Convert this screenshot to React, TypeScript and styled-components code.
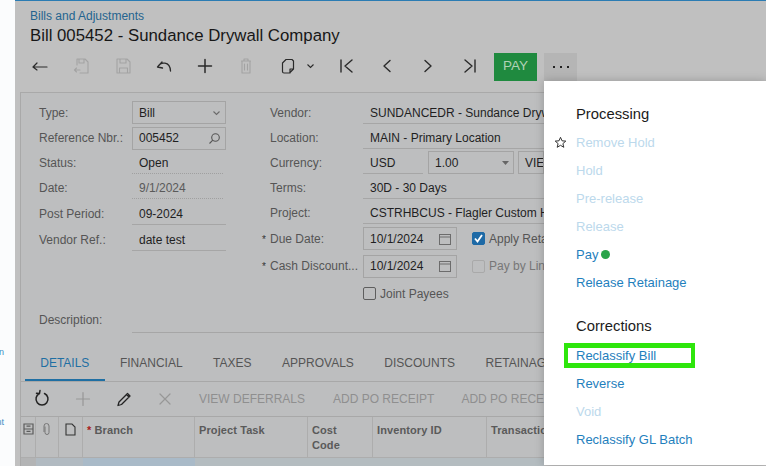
import React from "react";
import styled, { createGlobalStyle } from "styled-components";

const Global = createGlobalStyle`
  html, body { margin: 0; padding: 0; width: 766px; height: 466px; overflow: hidden; background: #fff; }
  * { box-sizing: border-box; }
  body { font-family: "Liberation Sans", Arial, sans-serif; }
`;

const Page = styled.div`
  position: relative;
  width: 766px;
  height: 466px;
  display: flex;
  overflow: hidden;
`;
const Rail = styled.div`
  width: 15px;
  flex: none;
  background: #fbfcfd;
  color: #3f8fc4;
  font-size: 9px;
  position: relative;
  overflow: hidden;
`;
const RailText = styled.span<{ $top: number }>`
  position: absolute;
  right: 11px;
  top: ${(p) => p.$top}px;
  line-height: 10px;
`;
const Main = styled.div`
  flex: 1;
  min-width: 0;
  background: #c0c0c0;
  border-top: 1px solid #2b7cb3;
  display: flex;
  flex-direction: column;
`;
const Crumb = styled.div`
  margin: 9px 0 0 15px;
  font-size: 12px;
  line-height: 12px;
  color: #24648f;
`;
const Title = styled.div`
  margin: 4px 0 0 15px;
  font-size: 16.8px;
  line-height: 20px;
  color: #171717;
  white-space: nowrap;
`;
const Toolbar = styled.div`
  height: 28px;
  margin-top: 7px;
  display: flex;
  align-items: flex-start;
  flex: none;
`;
const ToolIcon = styled.span<{ $w: number; $off?: boolean; $ml?: number }>`
  width: ${(p) => p.$w}px;
  margin-left: ${(p) => p.$ml ?? 0}px;
  flex: none;
  height: 25px;
  display: flex;
  align-items: center;
  justify-content: center;
  color: ${(p) => (p.$off ? "#a3a3a3" : "#2a2a2a")};
`;
const PayButton = styled.div`
  width: 43px;
  height: 28px;
  margin-left: 6px;
  background: #1f8a3f;
  color: #b0d2b6;
  font-size: 13.5px;
  padding-bottom: 3px;
  display: flex;
  align-items: center;
  justify-content: center;
`;
const MoreButton = styled.div`
  width: 33px;
  height: 28px;
  margin-left: 7px;
  background: #b5b5b5;
  display: flex;
  align-items: center;
  justify-content: center;
  gap: 5px;
`;
const Dot = styled.i`
  width: 2px;
  height: 2px;
  background: #222;
`;
const FormPanel = styled.div`
  margin: 11px 0 0 5px;
  width: 524px;
  flex: 1;
  min-height: 0;
  background: #bdbebf;
  border-top: 1px solid #a9a9a9;
  border-left: 1px solid #a9a9a9;
  display: flex;
  flex-direction: column;
  overflow: hidden;
`;
const Columns = styled.div`
  display: flex;
  padding-top: 7px;
  flex: none;
`;
const LeftCol = styled.div`
  width: 227px;
  flex: none;
  display: flex;
  flex-direction: column;
`;
const RightCol = styled.div`
  flex: 1;
  min-width: 0;
  display: flex;
  flex-direction: column;
`;
const Row = styled.div<{ $h: number }>`
  height: ${(p) => p.$h}px;
  display: flex;
  align-items: center;
`;
const Label = styled.div<{ $w: number; $pl: number }>`
  width: ${(p) => p.$w}px;
  padding-left: ${(p) => p.$pl}px;
  flex: none;
  font-size: 12px;
  color: #555;
  white-space: nowrap;
  position: relative;
`;
const DescLabel = styled(Label)`
  padding-top: 6px;
`;
const Star = styled.span`
  position: absolute;
  left: 14px;
  top: 2px;
  color: #333;
  font-size: 10px;
`;
const Boxed = styled.div<{ $w: number; $ml?: number }>`
  width: ${(p) => p.$w}px;
  margin-left: ${(p) => p.$ml ?? 0}px;
  height: 23px;
  flex: none;
  border: 1px solid #a4a4a4;
  padding: 0 4px 0 6px;
  display: flex;
  align-items: center;
  justify-content: space-between;
  font-size: 12px;
  color: #1f1f1f;
  overflow: hidden;
  white-space: nowrap;
`;
const Plain = styled.div<{ $w: number; $line?: "solid" | "dotted"; $muted?: boolean }>`
  width: ${(p) => p.$w}px;
  height: 22px;
  flex: none;
  padding: 3px 0 0 7px;
  font-size: 12px;
  line-height: 16px;
  color: ${(p) => (p.$muted ? "#5a5a5a" : "#1f1f1f")};
  border-bottom: 1px ${(p) => (p.$line === "dotted" ? "dotted #a0a0a0" : "solid #a6a6a6")};
  white-space: nowrap;
  overflow: hidden;
`;
const Check = styled.span<{ $on?: boolean; $off?: boolean }>`
  width: 13px;
  height: 13px;
  flex: none;
  border-radius: 2px;
  border: 1px solid ${(p) => (p.$on ? "#1e6aa6" : p.$off ? "#a9a9a9" : "#5e5e5e")};
  background: ${(p) => (p.$on ? "#1e6aa6" : "transparent")};
  display: flex;
  align-items: center;
  justify-content: center;
`;
const CheckText = styled.span<{ $off?: boolean }>`
  margin-left: 4px;
  font-size: 12px;
  color: ${(p) => (p.$off ? "#777" : "#555")};
  white-space: nowrap;
`;
const CheckGroup = styled.div`
  display: flex;
  align-items: center;
  margin-left: 15px;
`;
const JointGroup = styled(CheckGroup)`
  margin-left: 115px;
`;
const DescRow = styled.div`
  display: flex;
  align-items: flex-start;
  height: 26px;
  flex: none;
`;
const DescLine = styled.div`
  flex: 1;
  height: 26px;
  border-bottom: 1px solid #a6a6a6;
`;
const Tabs = styled.div`
  height: 49px;
  flex: none;
  padding-left: 4px;
  border-bottom: 1px solid #a8a8a8;
  display: flex;
  overflow: hidden;
`;
const Tab = styled.div<{ $active?: boolean }>`
  flex: none;
  padding: 23px 15.25px 0;
  font-size: 12px;
  line-height: 14px;
  color: ${(p) => (p.$active ? "#1f6fa3" : "#555")};
  height: 49px;
  border-bottom: 3px solid ${(p) => (p.$active ? "#1f6fa3" : "transparent")};
  white-space: nowrap;
`;
const GridBar = styled.div`
  height: 35px;
  flex: none;
  border-bottom: 1px solid #a8a8a8;
  display: flex;
  align-items: center;
  font-size: 12px;
  color: #8f8f8f;
  white-space: nowrap;
  overflow: hidden;
`;
const BarIcon = styled.span<{ $w: number; $off?: boolean }>`
  width: ${(p) => p.$w}px;
  flex: none;
  display: flex;
  align-items: center;
  justify-content: center;
  color: ${(p) => (p.$off ? "#979797" : "#222")};
`;
const BarText = styled.span<{ $ml: number }>`
  margin-left: ${(p) => p.$ml}px;
  flex: none;
`;
const HeadRow = styled.div`
  height: 41px;
  display: flex;
  flex: none;
  border-bottom: 1px solid #adadad;
  overflow: hidden;
`;
const Head = styled.div<{ $w: number }>`
  width: ${(p) => p.$w}px;
  flex: none;
  border-right: 1px solid #adadad;
  padding: 5.5px 0 0 4px;
  font-size: 11px;
  font-weight: 700;
  line-height: 15px;
  color: #5a5a5a;
  white-space: nowrap;
  overflow: hidden;
  letter-spacing: 0.1px;
`;
const HeadIcon = styled(Head)`
  padding: 6px 0 0;
  display: flex;
  justify-content: center;
  align-items: flex-start;
`;
const Req = styled.span`
  color: #a81c1c;
`;
const DataRow = styled.div`
  display: flex;
  flex: 1;
  background: #b4bcc0;
`;
const DataCell = styled.div<{ $w: number; $tone?: string }>`
  width: ${(p) => p.$w}px;
  flex: none;
  background: ${(p) => p.$tone ?? "transparent"};
`;
const Menu = styled.div`
  position: absolute;
  left: 544px;
  top: 81px;
  width: 222px;
  height: 384px;
  background: #fff;
  box-shadow: 0 0 9px rgba(0, 0, 0, 0.22);
  padding: 23px 0 0 32px;
`;
const MenuHead = styled.div<{ $mt?: number }>`
  font-size: 14.8px;
  line-height: 20px;
  height: 20px;
  margin-top: ${(p) => p.$mt ?? 0}px;
  color: #1b1b1b;
`;
const MenuItem = styled.div<{ $off?: boolean; $mt?: number }>`
  font-size: 13px;
  height: 28px;
  margin-top: ${(p) => p.$mt ?? 0}px;
  display: flex;
  align-items: center;
  color: ${(p) => (p.$off ? "#bcd9ec" : "#1f80bd")};
  position: relative;
  white-space: nowrap;
`;
const StarIcon = styled.span`
  position: absolute;
  left: -22px;
  top: 8px;
  width: 13px;
  height: 13px;
  display: flex;
`;
const Green = styled.i`
  width: 9px;
  height: 9px;
  margin-left: 3px;
  border-radius: 50%;
  background: #2aa44a;
`;
const Highlight = styled.div`
  position: absolute;
  left: -12px;
  top: 2px;
  width: 131px;
  height: 25px;
  border-style: solid;
  border-color: #2ee60c;
  border-width: 5px 4px;
  pointer-events: none;
`;

const S = ({ children, sw = 1.4 }: { children: React.ReactNode; sw?: number }) => (
  <svg width={20} height={20} viewBox="0 0 20 20" fill="none" stroke="currentColor" strokeWidth={sw} strokeLinecap="round" strokeLinejoin="round">
    {children}
  </svg>
);

const Chevron = ({ tone = "#6a6a6a" }: { tone?: string }) => (
  <svg width="9" height="6" viewBox="0 0 9 6" fill="none" stroke={tone} strokeWidth="1.1">
    <path d="M1.500 1.500 4.500 4.500 7.500 1.500" />
  </svg>
);
const Calendar = () => (
  <svg width="14" height="14" viewBox="0 0 14 14" fill="none" stroke="#6c6c6c" strokeWidth="1">
    <rect x="1.500" y="2.500" width="11" height="10" />
    <path d="M1.500 5H12.500" />
  </svg>
);
const Tick = () => (
  <svg width="11" height="11" viewBox="0 0 11 11" fill="none" stroke="#fff" strokeWidth="1.800">
    <path d="M2 5.500 4.500 8.500 9 2" />
  </svg>
);

export default function App() {
  return (
    <Page>
      <Global />
      <Rail>
        <RailText $top={347}>n</RailText>
        <RailText $top={417}>nt</RailText>
      </Rail>
      <Main>
        <Crumb>Bills and Adjustments</Crumb>
        <Title>Bill 005452 - Sundance Drywall Company</Title>
        <Toolbar>
          <ToolIcon $w={50}><S sw={1.2}><path d="M3 11H17M3 11l4-4M3 11l4 3" /></S></ToolIcon>
          <ToolIcon $w={32} $off><S sw={1.1}><path d="M6 9V3h8l3 3v11H9M8 3v4h5V3M9 14H3.500M5.500 12l-2 2 2 2" /></S></ToolIcon>
          <ToolIcon $w={52} $off><S sw={1.1}><path d="M4 3h10l3 3v11H4zM7 3v4h6V3M6.500 17v-5h8v5" /></S></ToolIcon>
          <ToolIcon $w={30}><S sw={1.3}><path d="M3.500 11l4.500-5M3.500 11l5 1M3.500 11C6.500 5.500 16 5 16.500 15" /></S></ToolIcon>
          <ToolIcon $w={52}><S sw={1.5}><path d="M10 3.500v13M3.500 10h13" /></S></ToolIcon>
          <ToolIcon $w={30} $off><S sw={1.1}><path d="M5.500 5h9M8 5V3h4v2M6 5v12h8V5M8.500 8v6M11.500 8v6" /></S></ToolIcon>
          <ToolIcon $w={20} $ml={17}><S sw={1.2}><path d="M8 3.500h6l1.500 1.500v8l-4 4H6a1.500 1.500 0 0 1-1.500-1.500V7zM15.500 13H12v4" /></S></ToolIcon>
          <ToolIcon $w={24}><Chevron tone="#2a2a2a" /></ToolIcon>
          <ToolIcon $w={48}><S sw={1.4}><path d="M5 4v12M16 4 9 10l7 6" /></S></ToolIcon>
          <ToolIcon $w={34}><S sw={1.4}><path d="M13 4.500 7 10l6 5.500" /></S></ToolIcon>
          <ToolIcon $w={48}><S sw={1.4}><path d="M7 4.500 13 10l-6 5.500" /></S></ToolIcon>
          <ToolIcon $w={36}><S sw={1.4}><path d="M5 4l7 6-7 6M15 4v12" /></S></ToolIcon>
          <PayButton>PAY</PayButton>
          <MoreButton><Dot /><Dot /><Dot /></MoreButton>
        </Toolbar>
        <FormPanel>
          <Columns>
            <LeftCol>
              <Row $h={25}>
                <Label $w={111} $pl={18}>Type:</Label>
                <Boxed $w={94}>Bill<Chevron /></Boxed>
              </Row>
              <Row $h={26}>
                <Label $w={111} $pl={18}>Reference Nbr.:</Label>
                <Boxed $w={94}>
                  005452
                  <svg width="13" height="13" viewBox="0 0 13 13" fill="none" stroke="#555" strokeWidth="1.100">
                    <circle cx="7.500" cy="5.500" r="3.800" />
                    <path d="M4.800 8.200 1.500 11.500" />
                  </svg>
                </Boxed>
              </Row>
              <Row $h={24}>
                <Label $w={111} $pl={18}>Status:</Label>
                <Plain $w={91} $line="dotted">Open</Plain>
              </Row>
              <Row $h={25}>
                <Label $w={111} $pl={18}>Date:</Label>
                <Plain $w={91} $line="dotted" $muted>9/1/2024</Plain>
              </Row>
              <Row $h={28}>
                <Label $w={111} $pl={18}>Post Period:</Label>
                <Plain $w={94}>09-2024</Plain>
              </Row>
              <Row $h={24}>
                <Label $w={111} $pl={18}>Vendor Ref.:</Label>
                <Plain $w={94}>date test</Plain>
              </Row>
            </LeftCol>
            <RightCol>
              <Row $h={25}>
                <Label $w={115} $pl={22}>Vendor:</Label>
                <Plain $w={181}>SUNDANCEDR - Sundance Drywall Company</Plain>
              </Row>
              <Row $h={25}>
                <Label $w={115} $pl={22}>Location:</Label>
                <Plain $w={181}>MAIN - Primary Location</Plain>
              </Row>
              <Row $h={25}>
                <Label $w={115} $pl={22}>Currency:</Label>
                <Plain $w={60}>USD</Plain>
                <Boxed $w={86} $ml={5}>
                  1.00
                  <svg width="7" height="4" viewBox="0 0 7 4"><path d="M0 0h7L3.500 4z" fill="#666" /></svg>
                </Boxed>
                <Boxed $w={26} $ml={4}>VIEW</Boxed>
              </Row>
              <Row $h={25}>
                <Label $w={115} $pl={22}>Terms:</Label>
                <Plain $w={181}>30D - 30 Days</Plain>
              </Row>
              <Row $h={25}>
                <Label $w={115} $pl={22}>Project:</Label>
                <Plain $w={181}>CSTRHBCUS - Flagler Custom Homes</Plain>
              </Row>
              <Row $h={27}>
                <Label $w={115} $pl={22}><Star>*</Star>Due Date:</Label>
                <Boxed $w={94}>10/1/2024<Calendar /></Boxed>
                <CheckGroup>
                  <Check $on><Tick /></Check>
                  <CheckText>Apply Reta</CheckText>
                </CheckGroup>
              </Row>
              <Row $h={28}>
                <Label $w={115} $pl={22}><Star>*</Star>Cash Discount...</Label>
                <Boxed $w={94}>10/1/2024<Calendar /></Boxed>
                <CheckGroup>
                  <Check $off />
                  <CheckText $off>Pay by Lin</CheckText>
                </CheckGroup>
              </Row>
              <Row $h={27}>
                <JointGroup>
                  <Check />
                  <CheckText>Joint Payees</CheckText>
                </JointGroup>
              </Row>
            </RightCol>
          </Columns>
          <DescRow>
            <DescLabel $w={111} $pl={18}>Description:</DescLabel>
            <DescLine />
          </DescRow>
          <Tabs>
            <Tab $active>DETAILS</Tab>
            <Tab>FINANCIAL</Tab>
            <Tab>TAXES</Tab>
            <Tab>APPROVALS</Tab>
            <Tab>DISCOUNTS</Tab>
            <Tab>RETAINAGE</Tab>
          </Tabs>
          <GridBar>
            <BarIcon $w={41}><S sw={1.5}><path d="M7.500 4.500a6 6 0 1 0 5 0M8 1.500l-.5 3-3-.2" /></S></BarIcon>
            <BarIcon $w={41} $off><S sw={1.2}><path d="M10 3.500v13M3.500 10h13" /></S></BarIcon>
            <BarIcon $w={41}><S sw={1.3}><path d="M4 16.500l1-3.500 8.500-8.500 2.500 2.500-8.500 8.500zM12.500 5.500l2.500 2.500" /></S></BarIcon>
            <BarIcon $w={41} $off><S sw={1.2}><path d="M5 5l10 10M15 5 5 15" /></S></BarIcon>
            <BarText $ml={14}>VIEW DEFERRALS</BarText>
            <BarText $ml={28}>ADD PO RECEIPT</BarText>
            <BarText $ml={27}>ADD PO RECEIPT LINE</BarText>
          </GridBar>
          <HeadRow>
            <HeadIcon $w={15}>
              <svg width="11" height="12" viewBox="0 0 11 12" fill="none" stroke="#5c5c5c" strokeWidth="1.200"><path d="M1 1h9v10H1zM1 6h9M3.500 3.200h4M3.500 8.400h4" /></svg>
            </HeadIcon>
            <HeadIcon $w={23}>
              <svg width="10" height="13" viewBox="0 0 10 13" fill="none" stroke="#777" strokeWidth="1"><path d="M3 3.500v6a2 2 0 0 0 4 0V3a2.500 2.500 0 0 0-5 0v6" /></svg>
            </HeadIcon>
            <HeadIcon $w={24}>
              <svg width="11" height="13" viewBox="0 0 11 13" fill="none" stroke="#333" strokeWidth="1.100"><path d="M1 1h6l3 3v8H1z" /></svg>
            </HeadIcon>
            <Head $w={112}><Req>*</Req> Branch</Head>
            <Head $w={113}>Project Task</Head>
            <Head $w={65}>Cost<br />Code</Head>
            <Head $w={114}>Inventory ID</Head>
            <Head $w={120}>Transaction</Head>
          </HeadRow>
          <DataRow>
            <DataCell $w={15} $tone="#b3b4b5" />
            <DataCell $w={47} $tone="#b1bac1" />
            <DataCell $w={112} $tone="#a9bac8" />
          </DataRow>
        </FormPanel>
      </Main>
      <Menu>
        <MenuHead>Processing</MenuHead>
        <MenuItem $off $mt={4}>
          <StarIcon>
            <svg width="13" height="13" viewBox="0 0 13 13" fill="none" stroke="#333" strokeWidth="1">
              <path d="M6.500 1.300 8 4.800l3.800.3-2.900 2.500.9 3.700-3.300-2-3.300 2 .9-3.700L1.200 5.100 5 4.800z" />
            </svg>
          </StarIcon>
          Remove Hold
        </MenuItem>
        <MenuItem $off>Hold</MenuItem>
        <MenuItem $off>Pre-release</MenuItem>
        <MenuItem $off>Release</MenuItem>
        <MenuItem>Pay<Green /></MenuItem>
        <MenuItem>Release Retainage</MenuItem>
        <MenuHead $mt={20}>Corrections</MenuHead>
        <MenuItem $mt={5}>
          Reclassify Bill
          <Highlight />
        </MenuItem>
        <MenuItem>Reverse</MenuItem>
        <MenuItem $off>Void</MenuItem>
        <MenuItem>Reclassify GL Batch</MenuItem>
      </Menu>
    </Page>
  );
}
